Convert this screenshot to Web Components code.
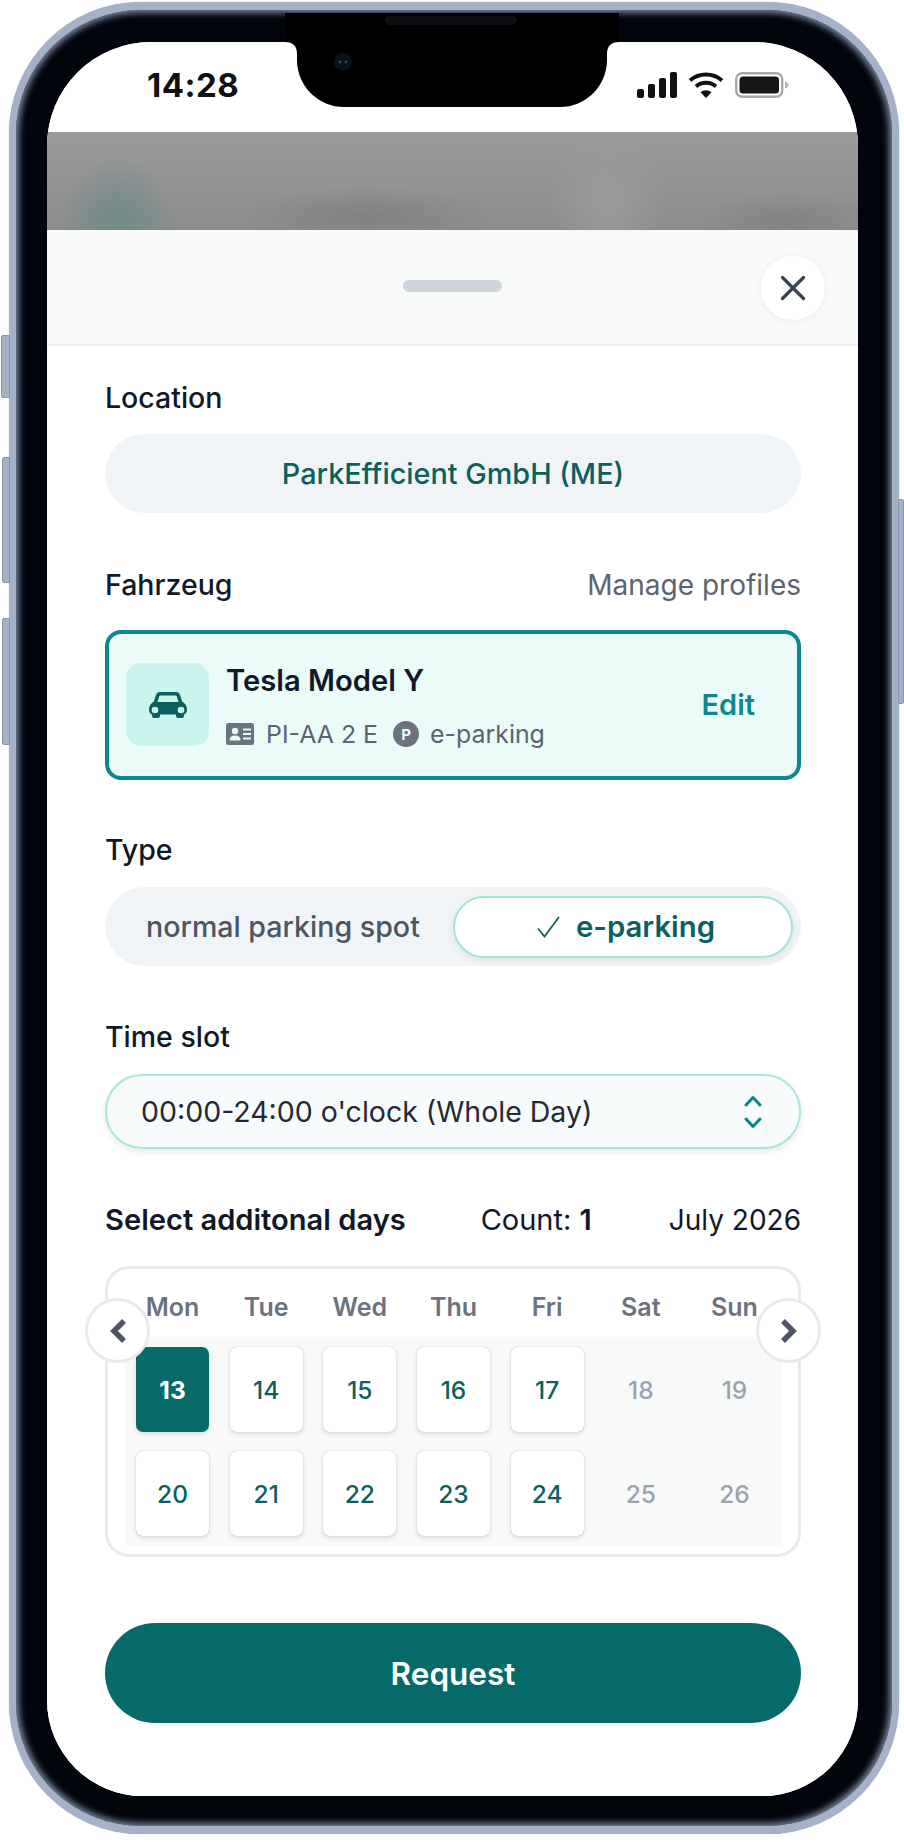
<!DOCTYPE html>
<html lang="en">
<head>
<meta charset="utf-8">
<title>Parking request</title>
<style>
  html, body { margin: 0; padding: 0; background: #fff; }
  body { font-family: "Inter", "Liberation Sans", sans-serif; color: #111827; }
</style>
</head>
<body>
<phone-frame>
  <status-bar></status-bar>
  <blur-band></blur-band>
  <sheet-header></sheet-header>
  <sheet-body>
    <form-field label="Location">
      <location-pill>ParkEfficient GmbH (ME)</location-pill>
    </form-field>
    <form-field label="Fahrzeug" action="Manage profiles" gap="28">
      <vehicle-card name="Tesla Model Y" plate="PI-AA 2 E" kind="e-parking"></vehicle-card>
    </form-field>
    <form-field label="Type" gap="20">
      <type-toggle></type-toggle>
    </form-field>
    <form-field label="Time slot" gap="20">
      <time-select>00:00-24:00 o'clock (Whole Day)</time-select>
    </form-field>
    <days-head></days-head>
    <day-calendar></day-calendar>
    <request-button>Request</request-button>
  </sheet-body>
</phone-frame>

<script>
(function () {

  const ICONS = {
    close: `<svg width="26" height="26" viewBox="0 0 26 26" fill="none" stroke="#374151" stroke-width="3.2" stroke-linecap="round"><path d="M2.5 2.5l21 21"/><path d="M23.5 2.5l-21 21"/></svg>`,
    car: `<svg width="38" height="26" viewBox="0 0 38 26"><path fill="#0b5f5c" fill-rule="evenodd" d="M11 0H27Q30 0 31 3L33.2 9.5Q38 12.5 38 17.5Q38 21.5 35 22.5V24Q35 26 33 26H29Q27 26 27 24V22.5H11V24Q11 26 9 26H5Q3 26 3 24V22.5Q0 21.5 0 17.5Q0 12.5 4.8 9.5L7 3Q8 0 11 0ZM11.5 3.5Q10.5 3.5 10.2 4.5L8.5 10H29.5L27.8 4.5Q27.5 3.5 26.5 3.5ZM6 14.7A3.3 3.3 0 1 0 6 21.3A3.3 3.3 0 1 0 6 14.7ZM32 14.7A3.3 3.3 0 1 0 32 21.3A3.3 3.3 0 1 0 32 14.7Z"/></svg>`,
    card: `<svg width="28" height="22" viewBox="0 0 28 22"><rect width="28" height="22" rx="2.5" fill="#6b7280"/><circle cx="9" cy="8" r="3.2" fill="#eafbf8"/><path d="M3.5 17.5q0-5 5.5-5t5.5 5z" fill="#eafbf8"/><path d="M17 6.5h8M17 11h8M17 15.5h8" stroke="#eafbf8" stroke-width="1.8"/></svg>`,
    check: `<svg width="23" height="22" viewBox="0 0 23 22" fill="none" stroke="#0b5f5c" stroke-width="1.7"><path d="M1 12.5l6.5 8L22 1"/></svg>`,
    updown: `<svg width="20" height="34" viewBox="0 0 20 34" fill="none" stroke="#0d8585" stroke-width="3" stroke-linecap="round" stroke-linejoin="round"><path d="M3 10L10 2.5L17 10"/><path d="M3 24L10 31.5L17 24"/></svg>`,
    prev: `<svg width="18" height="26" viewBox="0 0 18 26" fill="none" stroke="#4b5563" stroke-width="5.5" stroke-linejoin="miter"><path d="M15 3L5 13L15 23"/></svg>`,
    next: `<svg width="18" height="26" viewBox="0 0 18 26" fill="none" stroke="#4b5563" stroke-width="5.5" stroke-linejoin="miter"><path d="M3 3L13 13L3 23"/></svg>`,
    signal: `<svg width="40" height="26" viewBox="0 0 40 26" fill="#111"><rect x="0" y="17" width="7" height="9" rx="2"/><rect x="11" y="12" width="7" height="14" rx="2"/><rect x="22" y="6" width="7" height="20" rx="2"/><rect x="33" y="0" width="7" height="26" rx="2"/></svg>`,
    wifi: `<svg width="36" height="26" viewBox="0 0 36 26" fill="none" stroke="#111" stroke-width="3.8"><path d="M2 8.5C11 .5 25 .5 34 8.5"/><path d="M8 14.5C13.5 9.5 22.5 9.5 28 14.5"/><path d="M18 26L12.5 20.2C15.5 17.5 20.5 17.5 23.5 20.2Z" fill="#111" stroke="none"/></svg>`,
    battery: `<svg width="54" height="26" viewBox="0 0 54 26"><rect x="1.2" y="1.2" width="46" height="23.6" rx="6" fill="none" stroke="#a9a9a9" stroke-width="2.4"/><rect x="4.5" y="4.5" width="39.5" height="17" rx="3.5" fill="#161616"/><path d="M50 9.5q3.5 1 3.5 3.5t-3.5 3.5z" fill="#b5b5b5"/></svg>`,
  };

  class PhoneFrame extends HTMLElement {
    constructor() {
      super();
      this.attachShadow({mode: 'open'});
      this.shadowRoot.innerHTML = `
        <style>
        :host {
          display: block;
          position: relative;
          box-sizing: border-box;
          width: 890px;
          height: 1832px;
          margin: 2px 0 0 9px;
        }
        .body {
          box-sizing: border-box;
          height: 100%;
          padding: 32px 34px 30px 31px;
          background: #02060c;
          border-style: solid;
          border-color: #a5b1c8;
          border-width: 8px 7px 8px 7px;
          border-radius: 132px;
          box-shadow: 0 0 1px 0 #7d8798, inset 0 0 6px 3px rgba(126, 140, 166, .95);
        }
        .screen {
          display: flex;
          flex-direction: column;
          height: 100%;
          overflow: hidden;
          background: #fff;
          border-radius: 104px 104px 96px 96px;
        }
        .notch { position: absolute; left: 276px; top: 0; width: 334px; height: 105px; }
        .side { position: absolute; background: #a3b0c6; border: 1px solid #8996ae; box-sizing: border-box; }
        </style>
        <div class="side" style="left:-8px;top:333px;width:9px;height:63px;border-radius:2px 0 0 2px"></div>
        <div class="side" style="left:-7px;top:455px;width:8px;height:126px;border-radius:2px 0 0 2px"></div>
        <div class="side" style="left:-7px;top:616px;width:8px;height:127px;border-radius:2px 0 0 2px"></div>
        <div class="side" style="right:-5px;top:497px;width:6px;height:205px;border-radius:0 2px 2px 0"></div>
        <div class="body"><div class="screen"><slot></slot></div></div>
        <svg class="notch" viewBox="0 0 334 105">
          <path fill="#000" d="M0 11H334V40Q322 40 322 52V58A47 47 0 0 1 275 105H59A47 47 0 0 1 12 58V52Q12 40 0 40Z"/>
          <rect x="100" y="14" width="132" height="9" rx="4.5" fill="#0c0e11"/>
          <circle cx="58" cy="60" r="9" fill="#0b1118"/>
          <circle cx="55" cy="60" r="1.4" fill="#3b4856"/>
          <circle cx="61" cy="60" r="1.4" fill="#3b4856"/>
        </svg>
      `;
    }
  }

  class StatusBar extends HTMLElement {
    constructor() {
      super();
      this.attachShadow({mode: 'open'});
      this.shadowRoot.innerHTML = `
        <style>
        :host {
          display: flex;
          flex: none;
          align-items: center;
          justify-content: space-between;
          box-sizing: border-box;
          height: 90px;
          padding: 0 69px 4px 100px;
          background: #fff;
        }
        .time { font: 700 33px "Inter", sans-serif; color: #111; letter-spacing: .5px; }
        .icons { display: flex; align-items: center; gap: 11px; }
        svg { display: block; }
        </style>
        <span class="time">14:28</span>
        <div class="icons">${ICONS.signal}${ICONS.wifi}${ICONS.battery}</div>
      `;
    }
  }

  class BlurBand extends HTMLElement {
    constructor() {
      super();
      this.attachShadow({mode: 'open'});
      this.shadowRoot.innerHTML = `
        <style>
        :host {
          display: block;
          flex: none;
          height: 98px;
          background:
            radial-gradient(ellipse 58px 74px at 71px 98px, #6f8c89 0%, rgba(111,140,137,.6) 50%, rgba(111,140,137,0) 100%),
            radial-gradient(ellipse 130px 30px at 320px 85px, #828282 0%, rgba(130,130,130,0) 100%),
            radial-gradient(ellipse 60px 70px at 560px 70px, #9c9c9c 0%, rgba(156,156,156,0) 100%),
            radial-gradient(ellipse 90px 30px at 740px 90px, #838383 0%, rgba(131,131,131,0) 100%),
            linear-gradient(#9b9b9b, #8c8c8c);
        }
        </style>
      `;
    }
  }

  class SheetHeader extends HTMLElement {
    constructor() {
      super();
      this.attachShadow({mode: 'open'});
      this.shadowRoot.innerHTML = `
        <style>
        :host {
          display: grid;
          flex: none;
          grid-template-columns: 1fr auto 1fr;
          align-items: center;
          box-sizing: border-box;
          height: 116px;
          padding-bottom: 4px;
          background: #f8fafa;
          border-bottom: 2px solid #eff2f2;
        }
        .handle { width: 99px; height: 12px; border-radius: 6px; background: #cfd5da; margin-top: 1px; }
        button {
          justify-self: end;
          display: flex;
          align-items: center;
          justify-content: center;
          width: 64px;
          height: 64px;
          margin: 6px 33px 0 0;
          padding: 0;
          border: 0;
          border-radius: 50%;
          background: #fff;
          box-shadow: 0 1px 6px rgba(17, 24, 39, .06);
        }
        </style>
        <span></span>
        <div class="handle"></div>
        <button aria-label="Close">${ICONS.close}</button>
      `;
    }
  }

  class SheetBody extends HTMLElement {
    constructor() {
      super();
      this.attachShadow({mode: 'open'});
      this.shadowRoot.innerHTML = `
        <style>
        :host {
          display: flex;
          flex: 1;
          flex-direction: column;
          gap: 55px;
          box-sizing: border-box;
          padding: 35px 57px 0 58px;
          background: #fff;
        }
        </style>
        <slot></slot>
      `;
    }
  }

  class FormField extends HTMLElement {
    constructor() {
      super();
      this.attachShadow({mode: 'open'});
      const action = this.getAttribute('action');
      this.shadowRoot.innerHTML = `
        <style>
        :host {
          display: flex;
          flex-direction: column;
          gap: ${this.getAttribute('gap') || 19}px;
        }
        .head {
          display: flex;
          align-items: center;
          justify-content: space-between;
          height: 34px;
          font: 500 28.5px/34px "Inter", sans-serif;
          color: #111827;
        }
        .action { font-size: 28px; font-weight: 400; color: #5b6470; }
        </style>
        <div class="head">
          <span>${this.getAttribute('label')}</span>
          ${action ? `<span class="action">${action}</span>` : ''}
        </div>
        <slot></slot>
      `;
    }
  }

  class LocationPill extends HTMLElement {
    constructor() {
      super();
      this.attachShadow({mode: 'open'});
      this.shadowRoot.innerHTML = `
        <style>
        :host {
          display: flex;
          align-items: center;
          justify-content: center;
          height: 79px;
          border-radius: 40px;
          background: #f0f4f7;
          font: 500 28.8px "Inter", sans-serif;
          color: #0b5f5c;
        }
        </style>
        <slot></slot>
      `;
    }
  }

  class VehicleCard extends HTMLElement {
    constructor() {
      super();
      this.attachShadow({mode: 'open'});
      this.shadowRoot.innerHTML = `
        <style>
        :host {
          display: flex;
          align-items: center;
          box-sizing: border-box;
          height: 150px;
          margin-bottom: -2px;
          padding: 0 42px 0 17px;
          border: 4px solid #0e8790;
          border-radius: 16px;
          background: #ebfbf8;
        }
        .thumb {
          display: flex;
          flex: none;
          align-items: center;
          justify-content: center;
          width: 83px;
          height: 83px;
          margin-top: -1px;
          border-radius: 15px;
          background: #c9f5ee;
        }
        .info {
          display: flex;
          flex: 1;
          flex-direction: column;
          gap: 24px;
          margin: 1px 0 0 17px;
        }
        .name { font: 600 29.2px/33px "Inter", sans-serif; color: #111827; }
        .meta {
          display: flex;
          align-items: center;
          font: 400 24.9px/26px "Inter", sans-serif;
          color: #5b6470;
        }
        .meta svg { display: block; margin-right: 12px; }
        .badge {
          display: flex;
          align-items: center;
          justify-content: center;
          width: 26px;
          height: 26px;
          margin: 0 11px 0 15px;
          border-radius: 50%;
          background: #6b7280;
          color: #eafbf8;
          font: 700 15px "Inter", sans-serif;
        }
        .edit { margin-top: -2px; font: 600 29px "Inter", sans-serif; color: #0e8790; }
        </style>
        <div class="thumb">${ICONS.car}</div>
        <div class="info">
          <div class="name">${this.getAttribute('name')}</div>
          <div class="meta">
            ${ICONS.card}<span>${this.getAttribute('plate')}</span>
            <span class="badge">P</span><span>${this.getAttribute('kind')}</span>
          </div>
        </div>
        <span class="edit">Edit</span>
      `;
    }
  }

  class TypeToggle extends HTMLElement {
    constructor() {
      super();
      this.attachShadow({mode: 'open'});
      this.shadowRoot.innerHTML = `
        <style>
        :host {
          display: flex;
          align-items: center;
          box-sizing: border-box;
          height: 79px;
          margin-bottom: -1px;
          padding: 0 8px 0 41px;
          border-radius: 40px;
          background: #f0f4f7;
          font: 500 28.6px "Inter", sans-serif;
        }
        .off { flex: 1; color: #4b5563; }
        .on {
          display: flex;
          align-items: center;
          justify-content: center;
          gap: 16px;
          box-sizing: border-box;
          width: 340px;
          height: 62px;
          padding-left: 6px;
          border: 2.5px solid #9fe6d8;
          border-radius: 31px;
          background: #fff;
          box-shadow: 0 3px 7px rgba(17, 24, 39, .07);
          color: #0b5f5c;
          font-size: 29.3px;
          font-weight: 600;
        }
        svg { display: block; }
        </style>
        <span class="off">normal parking spot</span>
        <span class="on">${ICONS.check}<span>e-parking</span></span>
      `;
    }
  }

  class TimeSelect extends HTMLElement {
    constructor() {
      super();
      this.attachShadow({mode: 'open'});
      this.shadowRoot.innerHTML = `
        <style>
        :host {
          display: flex;
          align-items: center;
          justify-content: space-between;
          box-sizing: border-box;
          height: 75px;
          margin-bottom: -1px;
          padding: 0 36px 0 34px;
          border: 2.5px solid #a6e8da;
          border-radius: 37px;
          background: #f7fbfb;
          box-shadow: 0 3px 6px rgba(17, 24, 39, .09);
          font: 400 28.5px "Inter", sans-serif;
          color: #1f2937;
        }
        svg { display: block; }
        </style>
        <span><slot></slot></span>
        ${ICONS.updown}
      `;
    }
  }

  class DaysHead extends HTMLElement {
    constructor() {
      super();
      this.attachShadow({mode: 'open'});
      this.shadowRoot.innerHTML = `
        <style>
        :host {
          display: flex;
          align-items: center;
          height: 34px;
          margin-bottom: -26px;
          font: 400 28px/34px "Inter", sans-serif;
          color: #111827;
        }
        .title { flex: 1; font-size: 29.1px; font-weight: 600; }
        .count { margin-right: 77px; font-size: 29px; }
        b { font-weight: 600; }
        </style>
        <span class="title">Select additonal days</span>
        <span class="count">Count: <b>1</b></span>
        <span>July 2026</span>
      `;
    }
  }

  class DayCell extends HTMLElement {
    constructor() {
      super();
      this.attachShadow({mode: 'open'});
      this.shadowRoot.innerHTML = `
        <style>
        :host {
          display: flex;
          align-items: center;
          justify-content: center;
          height: 85px;
          font: 450 24.5px "Inter", sans-serif;
          color: #9ca3af;
        }
        :host([open]) {
          border-radius: 7px;
          background: #fff;
          box-shadow: 0 0 1px rgba(17, 24, 39, .3), 0 2px 5px rgba(17, 24, 39, .14);
          color: #0b5f5c;
        }
        :host([selected]) {
          border-radius: 7px;
          background: #066b68;
          box-shadow: 0 2px 5px rgba(17, 24, 39, .14);
          color: #fff;
          font-weight: 700;
        }
        </style>
        <slot></slot>
      `;
    }
  }

  class DayCalendar extends HTMLElement {
    constructor() {
      super();
      this.attachShadow({mode: 'open'});
      const head = ['Mon', 'Tue', 'Wed', 'Thu', 'Fri', 'Sat', 'Sun'];
      const cell = (n, i) => `<day-cell ${n === 13 ? 'selected' : i % 7 < 5 ? 'open' : ''}>${n}</day-cell>`;
      const days = [13, 14, 15, 16, 17, 18, 19, 20, 21, 22, 23, 24, 25, 26];
      this.shadowRoot.innerHTML = `
        <style>
        :host {
          display: block;
          position: relative;
          box-sizing: border-box;
          height: 291px;
          padding: 0 16px 7px 17px;
          border: 3px solid #e8eaec;
          border-radius: 24px;
          background: #fff;
        }
        .week, .days {
          display: grid;
          grid-template-columns: repeat(7, 1fr);
          column-gap: 20.6px;
          padding: 0 11px;
        }
        .week {
          height: 68px;
          padding-top: 8px;
          box-sizing: border-box;
          align-items: center;
          text-align: center;
          font: 600 25px "Inter", sans-serif;
          color: #6b7280;
        }
        .days {
          row-gap: 19px;
          padding-top: 10px;
          padding-bottom: 10px;
          background: #f8fafa;
        }
        button {
          position: absolute;
          top: 29px;
          display: flex;
          align-items: center;
          justify-content: center;
          box-sizing: border-box;
          width: 65px;
          height: 65px;
          padding: 0;
          border: 3px solid #e8eaec;
          border-radius: 50%;
          background: #fff;
        }
        .prev { left: -23px; }
        .next { right: -23px; }
        </style>
        <div class="week">${head.map(d => `<span>${d}</span>`).join('')}</div>
        <div class="days">${days.map(cell).join('')}</div>
        <button class="prev" aria-label="Previous">${ICONS.prev}</button>
        <button class="next" aria-label="Next">${ICONS.next}</button>
      `;
    }
  }

  class RequestButton extends HTMLElement {
    constructor() {
      super();
      this.attachShadow({mode: 'open'});
      this.shadowRoot.innerHTML = `
        <style>
        :host {
          display: flex;
          align-items: center;
          justify-content: center;
          height: 100px;
          margin-top: 11px;
          border-radius: 50px;
          background: #066b68;
          color: #fff;
          font: 600 31.5px "Inter", sans-serif;
        }
        </style>
        <slot></slot>
      `;
    }
  }

  customElements.define('phone-frame', PhoneFrame);
  customElements.define('status-bar', StatusBar);
  customElements.define('blur-band', BlurBand);
  customElements.define('sheet-header', SheetHeader);
  customElements.define('sheet-body', SheetBody);
  customElements.define('form-field', FormField);
  customElements.define('location-pill', LocationPill);
  customElements.define('vehicle-card', VehicleCard);
  customElements.define('type-toggle', TypeToggle);
  customElements.define('time-select', TimeSelect);
  customElements.define('days-head', DaysHead);
  customElements.define('day-cell', DayCell);
  customElements.define('day-calendar', DayCalendar);
  customElements.define('request-button', RequestButton);
})();
</script>
</body>
</html>
